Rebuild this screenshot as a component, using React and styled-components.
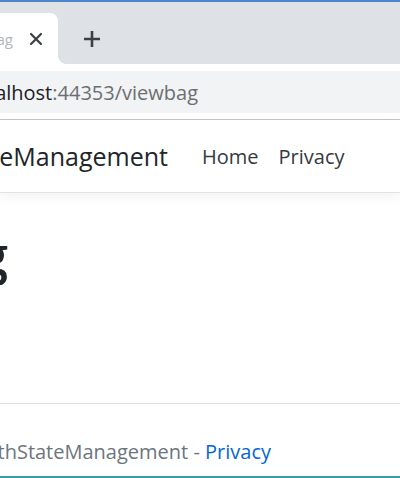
import styled, { createGlobalStyle } from 'styled-components'

const Global = createGlobalStyle`
  html, body { margin: 0; padding: 0; background: #fff; }
  body { font-family: "Open Sans", "Noto Sans", sans-serif; }
  #root { width: 400px; height: 478px; overflow: hidden; }
`

const Window = styled.div`
  width: 400px;
  height: 478px;
  box-sizing: border-box;
  border-top: 2px solid #4a86c8;
  border-bottom: 2px solid #3d9aa6;
  display: flex;
  flex-direction: column;
  overflow: hidden;
`

const TabStrip = styled.div`
  height: 62px;
  flex: none;
  background: #dee1e6;
  display: flex;
  align-items: flex-end;
`

const Tab = styled.div`
  position: relative;
  width: 58px;
  height: 51px;
  background: #fff;
  border-top-right-radius: 8px;
  display: flex;
  align-items: center;
  &::after {
    content: "";
    position: absolute;
    right: -8px;
    bottom: 0;
    width: 8px;
    height: 8px;
    background: radial-gradient(circle at 100% 0, transparent 7.5px, #fff 8px);
  }
`

// clips text so only its right end shows, as in a cropped window
const Clip = styled.div`
  width: ${p => p.$w}px;
  flex: none;
  overflow: hidden;
  display: flex;
  justify-content: flex-end;
  white-space: nowrap;
`

const TabTitle = styled.span`
  font-size: 15px;
  color: #b3b6ba;
`

const Close = styled.div`
  margin-left: 16px;
  display: flex;
  color: #3c4043;
`

const NewTab = styled.div`
  margin-left: 25px;
  align-self: center;
  margin-top: 12px;
  display: flex;
  color: #3c4043;
`

const Toolbar = styled.div`
  height: 56px;
  flex: none;
  padding-top: 7px;
  box-sizing: border-box;
  background: #fff;
  border-bottom: 1px solid #c4c4c4;
`

const Omnibox = styled.div`
  height: 42px;
  background: #f1f3f4;
  display: flex;
  align-items: center;
  font-size: 20px;
  color: #6b6f73;
`

const Host = styled.span`
  color: #202124;
`

const Navbar = styled.nav`
  height: 73px;
  flex: none;
  box-sizing: border-box;
  background: #fff;
  border-bottom: 1px solid #e3e3e3;
  box-shadow: 0 4px 12px rgba(0, 0, 0, 0.05);
  display: flex;
  align-items: center;
  position: relative;
`

const Brand = styled.span`
  font-size: 25px;
  color: #212529;
`

const NavLinks = styled.div`
  display: flex;
  gap: 20px;
  margin-left: 34px;
`

const NavLink = styled.a`
  font-size: 20px;
  color: #343a40;
  text-decoration: none;
`

const Main = styled.main`
  flex: 1;
  padding-top: 30px;
`

const Heading = styled.h1`
  margin: 0;
  font-size: 52px;
  font-weight: 600;
  color: #212529;
  line-height: 1.2;
`

const Footer = styled.footer`
  flex: none;
  height: 73px;
  box-sizing: border-box;
  border-top: 1px solid #dee2e6;
  padding-top: 34px;
  font-size: 20px;
  line-height: 28px;
  color: #6c757d;
`

const FooterLink = styled.a`
  color: #0366d6;
  text-decoration: none;
`

export default function App() {
  return (
    <>
      <Global />
      <Window>
        <TabStrip>
          <Tab>
            <Clip $w={13}>
              <TabTitle>ViewBag</TabTitle>
            </Clip>
            <Close>
              <svg width="14" height="14" viewBox="0 0 14 14">
                <path d="M2 2L12 12M12 2L2 12" stroke="currentColor" strokeWidth="2.2" strokeLinecap="round" />
              </svg>
            </Close>
          </Tab>
          <NewTab>
            <svg width="18" height="18" viewBox="0 0 18 18">
              <path d="M9 1V17M1 9H17" stroke="currentColor" strokeWidth="2.6" />
            </svg>
          </NewTab>
        </TabStrip>
        <Toolbar>
          <Omnibox>
            <Clip $w={198}>
              <Host>localhost</Host>:44353/viewbag
            </Clip>
          </Omnibox>
        </Toolbar>
        <Navbar>
          <Clip $w={168}>
            <Brand>WebAppWithStateManagement</Brand>
          </Clip>
          <NavLinks>
            <NavLink href="#">Home</NavLink>
            <NavLink href="#">Privacy</NavLink>
          </NavLinks>
        </Navbar>
        <Main>
          <Clip $w={8}>
            <Heading>ViewBag</Heading>
          </Clip>
        </Main>
        <Footer>
          <Clip $w={271}>
            <span>
              &copy; 2021 - WebAppWithStateManagement - <FooterLink href="#">Privacy</FooterLink>
            </span>
          </Clip>
        </Footer>
      </Window>
    </>
  )
}
